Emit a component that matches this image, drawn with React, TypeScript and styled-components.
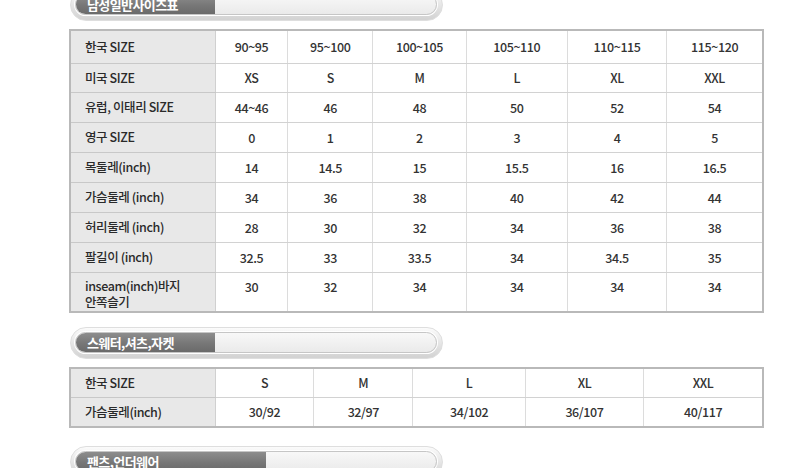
import React from 'react';
import styled, { createGlobalStyle } from 'styled-components';

const GlobalStyle = createGlobalStyle`
  html, body {
    margin: 0;
    padding: 0;
    background: #ffffff;
  }
  body {
    font-family: "Noto Sans CJK KR", "Noto Sans", sans-serif;
    color: #333333;
    overflow: hidden;
  }
`;

const Page = styled.div`
  width: 800px;
  height: 468px;
  overflow: hidden;
  padding-left: 69px;
  box-sizing: border-box;
`;

const BarOuter = styled.div<{ $top: number }>`
  width: 373px;
  height: 32px;
  margin-left: 1px;
  margin-top: ${({ $top }) => $top}px;
  box-sizing: border-box;
  border-radius: 16px;
  padding: 4px 5px 5px 4px;
  background: linear-gradient(#fbfbfb, #e2e2e2 60%, #d2d2d2);
  border: 1px solid #dedede;
`;

const BarInner = styled.div`
  height: 100%;
  display: flex;
  border-radius: 11px;
  overflow: hidden;
  box-sizing: border-box;
  border: 1px solid #c6c6c6;
  box-shadow: 0 0 0 1px #ffffff;
  background: linear-gradient(#f8f8f8, #eaeaea);
`;

const BarTitle = styled.div<{ $width: number }>`
  width: ${({ $width }) => $width}px;
  display: flex;
  align-items: center;
  padding-left: 11px;
  box-sizing: border-box;
  background: linear-gradient(#8d8d8d, #777777 55%, #6a6a6a);
  color: #ffffff;
  font-size: 13px;
  font-weight: 700;
  letter-spacing: -0.6px;
`;

const Table = styled.table<{ $top: number }>`
  margin-top: ${({ $top }) => $top}px;
  width: 695px;
  border-collapse: collapse;
  table-layout: fixed;
  border: 2px solid #b9b9b9;
  font-size: 12.5px;
  font-weight: 500;
  letter-spacing: -0.4px;
`;

const Row = styled.tr<{ $h: number; $top?: boolean }>`
  height: ${({ $h }) => $h}px;

  & > td, & > th {
    vertical-align: ${({ $top }) => ($top ? 'top' : 'middle')};
    padding-top: ${({ $top }) => ($top ? '5px' : '0')};
  }
`;

const Label = styled.th`
  background: #e8e8e8;
  text-align: left;
  font-weight: 500;
  padding: 0 0 0 14px;
  line-height: 18px;
  border-bottom: 1px solid #c8c8c8;
  border-right: 1px solid #d0d0d0;
  color: #2a2a2a;
`;

const LabelLine = styled.span`
  display: block;
  line-height: 16px;
  height: 16px;
`;

const Cell = styled.td`
  text-align: center;
  padding: 0;
  line-height: 17px;
  border-bottom: 1px solid #d2d2d2;
  border-right: 1px solid #dcdcdc;
  color: #333333;
`;

const mainCols = [145, 72, 85, 93, 101, 99, 96];
const topCols = [145, 98, 99, 112, 118, 119];

type RowData = { label: string; values: string[]; h: number; top?: boolean };

const mainRows: RowData[] = [
  { label: '한국 SIZE', values: ['90~95', '95~100', '100~105', '105~110', '110~115', '115~120'], h: 33 },
  { label: '미국 SIZE', values: ['XS', 'S', 'M', 'L', 'XL', 'XXL'], h: 29 },
  { label: '유럽, 이태리 SIZE', values: ['44~46', '46', '48', '50', '52', '54'], h: 30 },
  { label: '영구 SIZE', values: ['0', '1', '2', '3', '4', '5'], h: 30 },
  { label: '목둘레(inch)', values: ['14', '14.5', '15', '15.5', '16', '16.5'], h: 30 },
  { label: '가슴둘레 (inch)', values: ['34', '36', '38', '40', '42', '44'], h: 30 },
  { label: '허리둘레 (inch)', values: ['28', '30', '32', '34', '36', '38'], h: 30 },
  { label: '팔길이 (inch)', values: ['32.5', '33', '33.5', '34', '34.5', '35'], h: 30 },
  { label: 'inseam(inch)바지\n안쪽슬기', values: ['30', '32', '34', '34', '34', '34'], h: 40, top: true },
];

const topRows: RowData[] = [
  { label: '한국 SIZE', values: ['S', 'M', 'L', 'XL', 'XXL'], h: 29 },
  { label: '가슴둘레(inch)', values: ['30/92', '32/97', '34/102', '36/107', '40/117'], h: 30 },
];

const SectionBar: React.FC<{ title: string; titleWidth: number; top: number }> = ({ title, titleWidth, top }) => (
  <BarOuter $top={top}>
    <BarInner>
      <BarTitle $width={titleWidth}>{title}</BarTitle>
    </BarInner>
  </BarOuter>
);

const SizeTable: React.FC<{ cols: number[]; rows: RowData[]; top: number }> = ({ cols, rows, top }) => (
  <Table $top={top}>
    <colgroup>
      {cols.map((w, i) => (
        <col key={i} style={{ width: w }} />
      ))}
    </colgroup>
    <tbody>
      {rows.map((row) => (
        <Row key={row.label} $h={row.h} $top={row.top}>
          <Label>
            {row.label.includes('\n')
              ? row.label.split('\n').map((line, i) => <LabelLine key={i}>{line}</LabelLine>)
              : row.label}
          </Label>
          {row.values.map((v, i) => (
            <Cell key={i}>{v}</Cell>
          ))}
        </Row>
      ))}
    </tbody>
  </Table>
);

const App: React.FC = () => (
  <>
    <GlobalStyle />
    <Page>
      <SectionBar title="남성일반사이즈표" titleWidth={139} top={-11} />
      <SizeTable cols={mainCols} rows={mainRows} top={8} />
      <SectionBar title="스웨터,셔츠,자켓" titleWidth={139} top={14} />
      <SizeTable cols={topCols} rows={topRows} top={8} />
      <SectionBar title="팬츠,언더웨어" titleWidth={190} top={18} />
    </Page>
  </>
);

export default App;
